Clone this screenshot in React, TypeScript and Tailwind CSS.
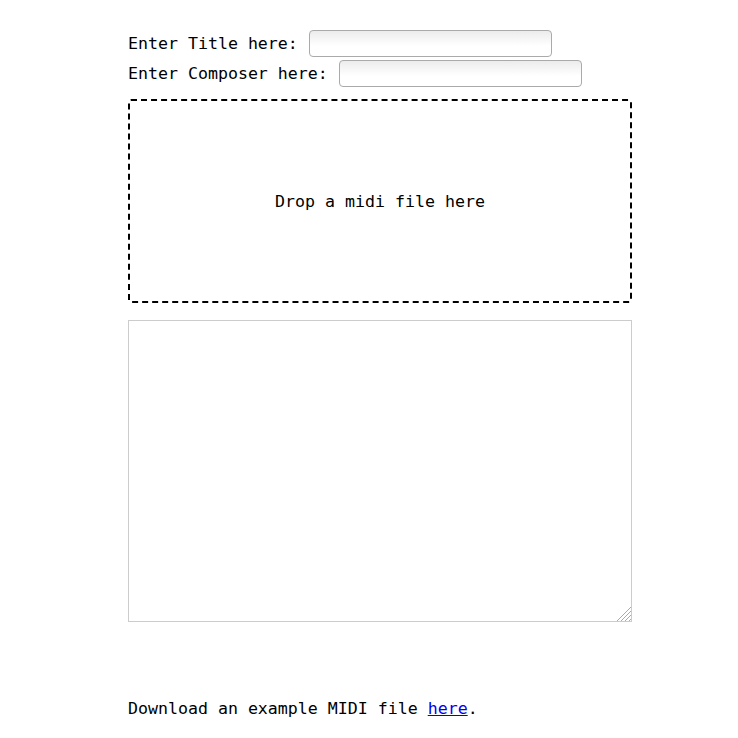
export default function App() {
  const mono = { fontFamily: '"DejaVu Sans Mono", monospace' };
  return (
    <div className="min-h-[738px] bg-white text-black" style={mono}>
      <div className="ml-[128px] w-[504px] pt-[29px] text-[16.6px]">
        <div className="flex h-[30px] items-center whitespace-pre">
          <span>Enter Title here: </span>
          <input className="mb-[2px] ml-[1px] h-[27px] w-[243px] rounded-[4px] border border-[#aaa] bg-gradient-to-b from-[#ececec] to-white to-60% outline-none" />
        </div>
        <div className="flex h-[30px] items-center whitespace-pre">
          <span>Enter Composer here: </span>
          <input className="mb-[2px] ml-[1px] h-[27px] w-[243px] rounded-[4px] border border-[#aaa] bg-gradient-to-b from-[#ececec] to-white to-60% outline-none" />
        </div>
        <div className="mt-[10px] flex h-[204px] items-center justify-center rounded-[3px] border-2 border-dashed border-black pt-[2px]">
          Drop a midi file here
        </div>
        <div className="relative mt-[17px] h-[302px]">
          <textarea className="block h-full w-full resize-none border border-[#ccc] outline-none" />
          <svg className="pointer-events-none absolute bottom-[1px] right-[1px]" width="15" height="15" viewBox="0 0 15 15">
            <g stroke="#aaa" strokeWidth="1">
              <line x1="15" y1="1" x2="1" y2="15" />
              <line x1="15" y1="5" x2="5" y2="15" />
              <line x1="15" y1="9" x2="9" y2="15" />
              <line x1="15" y1="13" x2="13" y2="15" />
            </g>
          </svg>
        </div>
        <p className="mt-[75px] leading-[24px]">
          Download an example MIDI file{' '}
          <a href="#" className="text-[#0000ee] underline">here</a>.
        </p>
      </div>
    </div>
  );
}
